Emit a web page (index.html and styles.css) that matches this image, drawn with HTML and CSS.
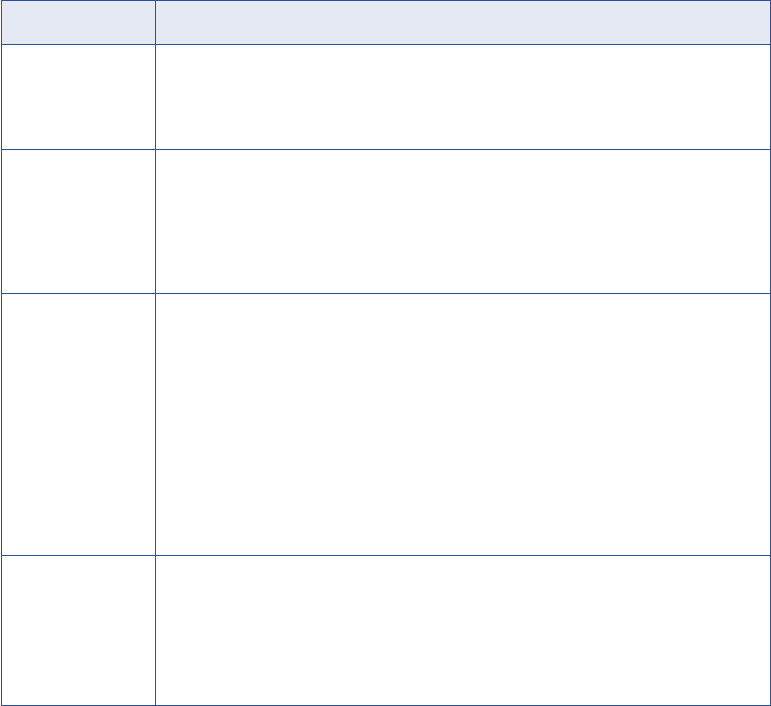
FILE: index.html
```html
<!DOCTYPE html>
<html>
<head>
<meta charset="utf-8">
<link rel="stylesheet" href="styles.css">
</head>
<body>
<div class="table">
  <div class="cell head"></div><div class="cell head"></div>
  <div class="cell"></div><div class="cell"></div>
  <div class="cell"></div><div class="cell"></div>
  <div class="cell"></div><div class="cell"></div>
  <div class="cell"></div><div class="cell"></div>
</div>
</body>
</html>
```
FILE: styles.css
```css
html, body { margin: 0; padding: 0; background: #ffffff; }
body { font-family: "Liberation Sans", Arial, sans-serif; }
.table {
  margin-left: 1px;
  width: 770px;
  box-sizing: border-box;
  padding: 1px;
  display: grid;
  grid-template-columns: 153px 1fr;
  grid-template-rows: 43px 104px 143px 261px 149px;
  gap: 1px;
  background: #2b4f9c;
}
.cell { background: #ffffff; }
.cell.head { background: #e4e9f4; }
```
